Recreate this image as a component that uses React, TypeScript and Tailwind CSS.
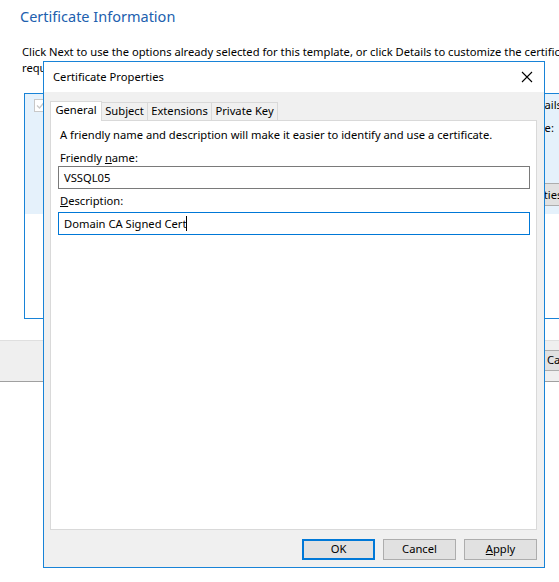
import React from "react";

const font = { fontFamily: '"Noto Sans", "Open Sans", sans-serif' };

function Btn({ children, primary = false }: { children: React.ReactNode; primary?: boolean }) {
  return (
    <div
      className={
        "w-[73px] h-[21px] flex items-center justify-center bg-[#e1e1e1] text-[11.2px] text-black " +
        (primary ? "border-2 border-[#0078d7]" : "border border-[#adadad]")
      }
    >
      {children}
    </div>
  );
}

export default function App() {
  return (
    <div className="relative w-[559px] h-[582px] overflow-hidden bg-white text-black" style={font}>
      {/* Background wizard page */}
      <div className="flex flex-col">
        <div className="pl-[20px] pt-[5px] h-[36px] text-[14.5px] text-[#2160ae] leading-[22px]">
          Certificate Information
        </div>
        <div className="pl-[22px] pt-[8px] text-[11.2px] leading-[16px] whitespace-nowrap">
          <div>Click Next to use the options already selected for this template, or click Details to customize the certificate</div>
          <div>request, and then click Enroll.</div>
        </div>
        <div className="ml-[24px] mt-[17px] w-[600px] h-[226px] border border-[#1883d7] flex flex-col">
          <div className="h-[120px] bg-[#e5f1fb] flex">
            <div className="ml-[9px] mt-[5px] w-[13px] h-[13px] border border-[#c8c8c8] bg-white flex items-center justify-center">
              <svg width="9" height="9" viewBox="0 0 9 9">
                <path d="M1 4.5 L3.5 7 L8 1.5" stroke="#c8c8c8" strokeWidth="1.2" fill="none" />
              </svg>
            </div>
            <div className="ml-[479px] flex flex-col text-[11.2px] leading-[16px]">
              <div className="mt-[3px] whitespace-nowrap">Details</div>
              <div className="mt-[7px] whitespace-nowrap">Type:</div>
              <div className="mt-[47px] -ml-[25px] h-[23px] w-[80px] bg-[#e1e1e1] border border-[#adadad] flex items-center pl-[6px] whitespace-nowrap">
                Properties
              </div>
            </div>
          </div>
        </div>
        <div className="mt-[21px] h-[42px] bg-[#efefef] border-t border-[#dfdfdf] border-b border-b-[#a0a0a0] flex items-start">
          <div className="ml-[544px] mt-[9px] h-[21px] w-[75px] bg-[#e1e1e1] border border-[#adadad] text-[11.2px] flex items-center pl-[2px]">
            Cancel
          </div>
        </div>
      </div>

      {/* Dialog window */}
      <div className="absolute left-[43px] top-[61px] w-[502px] h-[507px] border border-[#1883d7] bg-[#f0f0f0] flex flex-col">
        <div className="h-[30px] bg-white flex items-center justify-between pl-[9px] pr-[10px] text-[11.2px]">
          <span>Certificate Properties</span>
          <svg width="12" height="12" viewBox="0 0 12 12" className="mr-[1px]">
            <path d="M1 1 L11 11 M11 1 L1 11" stroke="#000" strokeWidth="1.1" />
          </svg>
        </div>
        <div className="flex-1 flex flex-col px-[6px]">
          <div className="flex items-end mt-[9px] h-[19px] text-[11.2px]">
            <div className="w-[52px] h-[20px] -mb-[1px] bg-white border border-[#d9d9d9] border-b-0 flex items-center justify-center relative z-10 pb-[2px]">
              General
            </div>
            <div className="w-[46px] h-[18px] border border-[#d9d9d9] border-l-0 border-b-0 flex items-center justify-center">
              Subject
            </div>
            <div className="w-[64px] h-[18px] border border-[#d9d9d9] border-l-0 border-b-0 flex items-center justify-center">
              Extensions
            </div>
            <div className="w-[66px] h-[18px] border border-[#d9d9d9] border-l-0 border-b-0 flex items-center justify-center">
              Private Key
            </div>
          </div>
          <div className="h-[410px] w-[487px] bg-white border border-[#d9d9d9] flex flex-col px-[7px] text-[11.2px] leading-[16px]">
            <div className="mt-[6px] pl-[2px] whitespace-nowrap">
              A friendly name and description will make it easier to identify and use a certificate.
            </div>
            <div className="mt-[7px] pl-[2px]">
              Friendly <span className="underline">n</span>ame:
            </div>
            <div className="mt-[0px] w-[472px] h-[23px] border border-[#7a7a7a] flex items-center pl-[5px]">
              VSSQL05
            </div>
            <div className="mt-[4px] pl-[2px]">
              <span className="underline">D</span>escription:
            </div>
            <div className="mt-[3px] w-[472px] h-[23px] border border-[#0078d7] flex items-center pl-[5px]">
              Domain CA Signed Cert
              <span className="inline-block w-[1px] h-[15px] bg-black" />
            </div>
          </div>
          <div className="flex justify-end gap-[8px] mt-[9px] pr-[1px]">
            <Btn primary>OK</Btn>
            <Btn>Cancel</Btn>
            <Btn>
              <span>
                <span className="underline">A</span>pply
              </span>
            </Btn>
          </div>
        </div>
      </div>
    </div>
  );
}
